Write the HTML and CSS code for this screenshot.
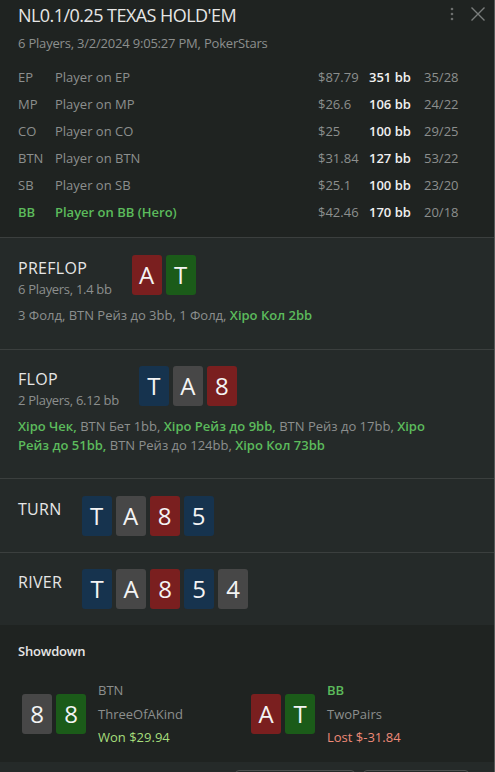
FILE: index.html
```html
<!DOCTYPE html>
<html>
<head>
<meta charset="utf-8">
<link rel="stylesheet" href="styles.css">
</head>
<body>
<div class="panel">
  <header class="head">
    <div class="title-row">
      <div class="title">NL0.1/0.25 TEXAS HOLD'EM</div>
      <div class="icons">
        <svg class="dots" width="6" height="16" viewBox="0 0 6 16"><circle cx="3" cy="3" r="1.3"/><circle cx="3" cy="8" r="1.3"/><circle cx="3" cy="13" r="1.3"/></svg>
        <svg class="close" width="16" height="16" viewBox="0 0 16 16"><path d="M1.5 1.5 L14.5 14.5 M14.5 1.5 L1.5 14.5"/></svg>
      </div>
    </div>
    <div class="subtitle">6 Players, 3/2/2024 9:05:27 PM, PokerStars</div>
    <div class="players">
      <span class="pos">EP</span><span class="name">Player on EP</span><span class="money">$87.79</span><span class="bb">351 bb</span><span class="ratio">35/28</span>
      <span class="pos">MP</span><span class="name">Player on MP</span><span class="money">$26.6</span><span class="bb">106 bb</span><span class="ratio">24/22</span>
      <span class="pos">CO</span><span class="name">Player on CO</span><span class="money">$25</span><span class="bb">100 bb</span><span class="ratio">29/25</span>
      <span class="pos">BTN</span><span class="name">Player on BTN</span><span class="money">$31.84</span><span class="bb">127 bb</span><span class="ratio">53/22</span>
      <span class="pos">SB</span><span class="name">Player on SB</span><span class="money">$25.1</span><span class="bb">100 bb</span><span class="ratio">23/20</span>
      <span class="pos hero">BB</span><span class="name hero">Player on BB (Hero)</span><span class="money">$42.46</span><span class="bb">170 bb</span><span class="ratio">20/18</span>
    </div>
  </header>

  <section class="street s-pre">
    <div class="street-row">
      <div class="street-info">
        <div class="street-name">PREFLOP</div>
        <div class="street-sub">6 Players, 1.4 bb</div>
      </div>
      <div class="cards">
        <div class="card red">A</div><div class="card green">T</div>
      </div>
    </div>
    <div class="actions">3 Фолд, BTN Рейз до 3bb, 1 Фолд, <b>Хіро Кол 2bb</b></div>
  </section>

  <section class="street s-flop">
    <div class="street-row">
      <div class="street-info">
        <div class="street-name">FLOP</div>
        <div class="street-sub">2 Players, 6.12 bb</div>
      </div>
      <div class="cards">
        <div class="card blue">T</div><div class="card gray">A</div><div class="card red">8</div>
      </div>
    </div>
    <div class="actions"><b>Хіро Чек,</b> BTN Бет 1bb, <b>Хіро Рейз до 9bb,</b> BTN Рейз до 17bb, <b>Хіро</b><br><b>Рейз до 51bb,</b> BTN Рейз до 124bb, <b>Хіро Кол 73bb</b></div>
  </section>

  <section class="street s-turn">
    <div class="street-row">
      <div class="street-info">
        <div class="street-name">TURN</div>
      </div>
      <div class="cards">
        <div class="card blue">T</div><div class="card gray">A</div><div class="card red">8</div><div class="card blue">5</div>
      </div>
    </div>
  </section>

  <section class="street s-river">
    <div class="street-row">
      <div class="street-info">
        <div class="street-name">RIVER</div>
      </div>
      <div class="cards">
        <div class="card blue">T</div><div class="card gray">A</div><div class="card red">8</div><div class="card blue">5</div><div class="card gray">4</div>
      </div>
    </div>
  </section>

  <section class="showdown">
    <div class="sd-title">Showdown</div>
    <div class="hands">
      <div class="hand">
        <div class="cards">
          <div class="card gray">8</div><div class="card green">8</div>
        </div>
        <div class="hand-info">
          <div class="hand-pos">BTN</div>
          <div class="hand-rank">ThreeOfAKind</div>
          <div class="won">Won $29.94</div>
        </div>
      </div>
      <div class="hand">
        <div class="cards">
          <div class="card red">A</div><div class="card green">T</div>
        </div>
        <div class="hand-info">
          <div class="hand-pos hero">BB</div>
          <div class="hand-rank">TwoPairs</div>
          <div class="lost">Lost $-31.84</div>
        </div>
      </div>
    </div>
  </section>

  <footer class="foot">
    <div class="btn b1"></div>
    <div class="btn b2"></div>
  </footer>
</div>
</body>
</html>
```

FILE: styles.css
```css
* { box-sizing: border-box; }
html, body {
  margin: 0;
  padding: 0;
  background: #252a29;
  height: 772px;
  overflow: hidden;
}
body {
  font-family: "Open Sans", "Noto Sans", sans-serif;
  color: #8c8f8e;
  font-size: 13px;
}
.panel {
  width: 495px;
  height: 772px;
  border-right: 1px solid #545857;
  display: flex;
  flex-direction: column;
}
.head {
  background: #1f2321;
  padding: 4px 8px 12px 18px;
  border-bottom: 1px solid #3b3f3e;
}
.title-row {
  display: flex;
  justify-content: space-between;
  align-items: flex-start;
}
.title {
  font-size: 18px;
  line-height: 22px;
  color: #e6e6e6;
  letter-spacing: -0.55px;
}
.icons {
  display: flex;
  align-items: center;
  gap: 15px;
  padding-top: 2px;
}
.dots circle { fill: #6c6f6e; }
.close path { stroke: #7a7d7c; stroke-width: 1.4; fill: none; }
.subtitle {
  margin-top: 8px;
  line-height: 18px;
  letter-spacing: -0.2px;
}
.players {
  margin-top: 11px;
  display: grid;
  grid-template-columns: 37px 263px 51px 55px 1fr;
  grid-auto-rows: 27px;
  align-items: center;
  line-height: 18px;
}
.players .bb {
  color: #f0f0f0;
  font-weight: 600;
}
.hero {
  color: #5cbb5c;
  font-weight: 600;
}
.street {
  padding: 16px 18px 16px 18px;
  border-bottom: 1px solid #3b3f3e;
}
.s-pre { padding-top: 17px; padding-bottom: 17px; }
.s-turn { padding-top: 17px; }
.s-river { border-bottom: none; }
.street-row {
  display: flex;
  align-items: flex-start;
  gap: 20px;
}
.street-name {
  margin-top: 3px;
  font-size: 16px;
  line-height: 20px;
  color: #e6e6e6;
  letter-spacing: 0.3px;
}
.street-sub {
  margin-top: 2px;
  line-height: 18px;
  letter-spacing: -0.3px;
}
.cards {
  display: flex;
  gap: 4px;
}
.card {
  width: 30px;
  height: 40px;
  border-radius: 3px;
  color: #f4f4f4;
  font-size: 24px;
  line-height: 40px;
  text-align: center;
}
.card.red { background: #7a1f1f; }
.card.green { background: #1b5b19; }
.card.blue { background: #16334e; }
.card.gray { background: #474747; }
.actions {
  margin-top: 8px;
  margin-bottom: 7px;
  line-height: 19px;
}
.actions b {
  color: #5cbb5c;
  font-weight: 600;
}
.showdown {
  background: #1f2321;
  padding: 17px 18px 0 18px;
  height: 137px;
}
.sd-title {
  color: #e6e6e6;
  font-weight: 600;
  line-height: 18px;
  letter-spacing: -0.2px;
}
.hands {
  margin-top: 19px;
  display: grid;
  grid-template-columns: 1fr 1fr;
}
.hand {
  display: flex;
  align-items: center;
  gap: 12px;
  padding-left: 4px;
}
.hand-info {
  line-height: 23.5px;
}
.won { color: #a6de7c; }
.lost { color: #ee8a78; }
.foot {
  flex: 1;
  background: #252a29;
  position: relative;
}
.btn {
  position: absolute;
  top: 8px;
  height: 30px;
  border: 1px solid #4c504f;
  border-radius: 4px;
}
.b1 { left: 235px; width: 120px; }
.b2 { left: 363px; width: 106px; }
```
